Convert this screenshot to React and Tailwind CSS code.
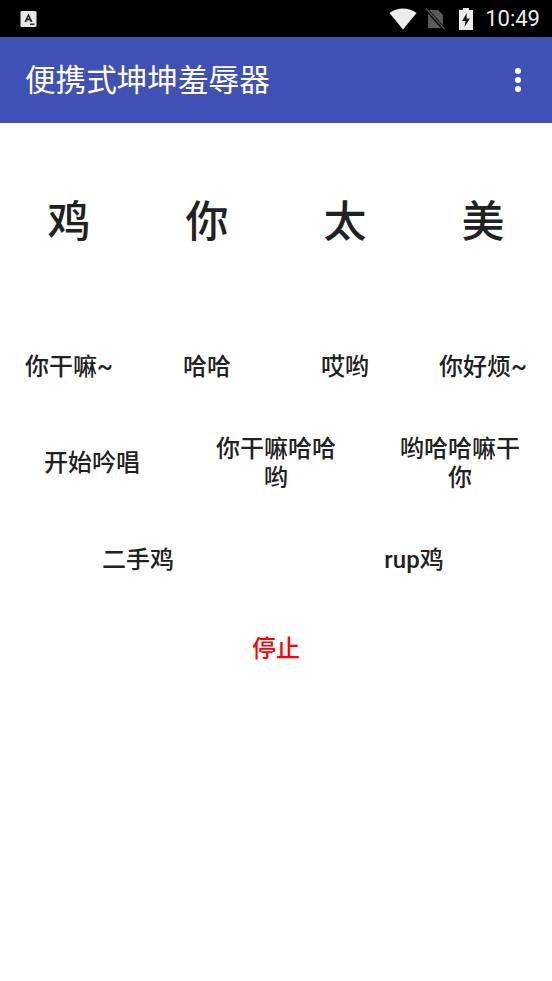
import React from "react";

const big = ["鸡", "你", "太", "美"];
const row1 = ["你干嘛~", "哈哈", "哎哟", "你好烦~"];
const row2 = ["开始吟唱", "你干嘛哈哈哟", "哟哈哈嘛干你"];
const row3 = ["二手鸡", "rup鸡"];

const Btn = ({ children, className = "" }) => (
  <button className={`flex flex-1 basis-0 items-center justify-center text-center font-medium ${className}`}>
    {children}
  </button>
);

const StatusBar = () => (
  <div className="flex h-[37px] items-center bg-black pl-[20px] pr-[12px]">
    {/* notification icon */}
    <svg width="17" height="18" viewBox="0 0 17 18">
      <rect x="0.5" y="1" width="16" height="16" rx="1.5" fill="#e8e8e8" />
      <path d="M4.5 12 L8.5 3.5 L12.5 12 H10.7 L10 10.2 H7 L6.3 12 Z M7.6 8.7 H9.4 L8.5 6.4 Z" fill="#111" />
      <rect x="10" y="13.5" width="4.5" height="1.5" fill="#333" />
    </svg>
    <div className="ml-auto flex items-center">
      {/* wifi */}
      <svg width="28" height="22" viewBox="0 0 28 22">
        <path d="M0.5 5 C8 -1 20 -1 27.5 5 L14 21.5 Z" fill="#ececec" />
      </svg>
      {/* no sim */}
      <svg className="ml-[8px]" width="21" height="22" viewBox="0 0 21 22">
        <path d="M3 2 H13 L18 7 V20 H3 Z" fill="#5a5a5a" />
        <path d="M0 0 L20 22" stroke="#000" strokeWidth="3.4" />
        <path d="M1 0.5 L19.5 21" stroke="#5a5a5a" strokeWidth="1.2" />
      </svg>
      {/* battery charging */}
      <svg className="ml-[12px]" width="16" height="24" viewBox="0 0 16 24">
        <path d="M5 1 H11 V3 H15 V23 H1 V3 H5 Z" fill="#ececec" />
        <path d="M9 6 L4 14 H7.5 L6.5 20 L12 11.5 H8.5 Z" fill="#111" />
      </svg>
      <span className="ml-[11px] font-['Roboto',sans-serif] text-[22px] leading-none text-[#ececec]">
        10:49
      </span>
    </div>
  </div>
);

export default function App() {
  return (
    <div className="min-h-[981px] bg-white font-['Roboto','Noto_Sans_CJK_SC',sans-serif] text-[#212121]">
      <StatusBar />
      <div className="flex h-[86px] items-center justify-between bg-[#3f51b5] pl-[25px] pr-[31px]">
        <h1 className="pt-[2px] text-[30.6px] font-normal leading-none text-white">便携式坤坤羞辱器</h1>
        <div className="flex flex-col gap-[3px]">
          <span className="h-[6px] w-[6px] rounded-full bg-white" />
          <span className="h-[6px] w-[6px] rounded-full bg-white" />
          <span className="h-[6px] w-[6px] rounded-full bg-white" />
        </div>
      </div>

      <div className="flex h-[196px] items-center pt-[3px]">
        {big.map((t) => (
          <Btn key={t} className="text-[43px]">{t}</Btn>
        ))}
      </div>

      <div className="flex h-[96px] items-center">
        {row1.map((t) => (
          <Btn key={t} className="text-[24px]">{t}</Btn>
        ))}
      </div>

      <div className="flex h-[96px] items-center pt-[1px]">
        {row2.map((t) => (
          <Btn key={t} className="px-6 text-[24px] leading-[29px]">{t}</Btn>
        ))}
      </div>

      <div className="flex h-[96px] items-center pt-[1px]">
        {row3.map((t) => (
          <Btn key={t} className="text-[24px]">{t}</Btn>
        ))}
      </div>

      <div className="flex h-[82px] items-center pt-[2px]">
        <Btn className="text-[24px] text-[#ff0000]">停止</Btn>
      </div>
    </div>
  );
}
